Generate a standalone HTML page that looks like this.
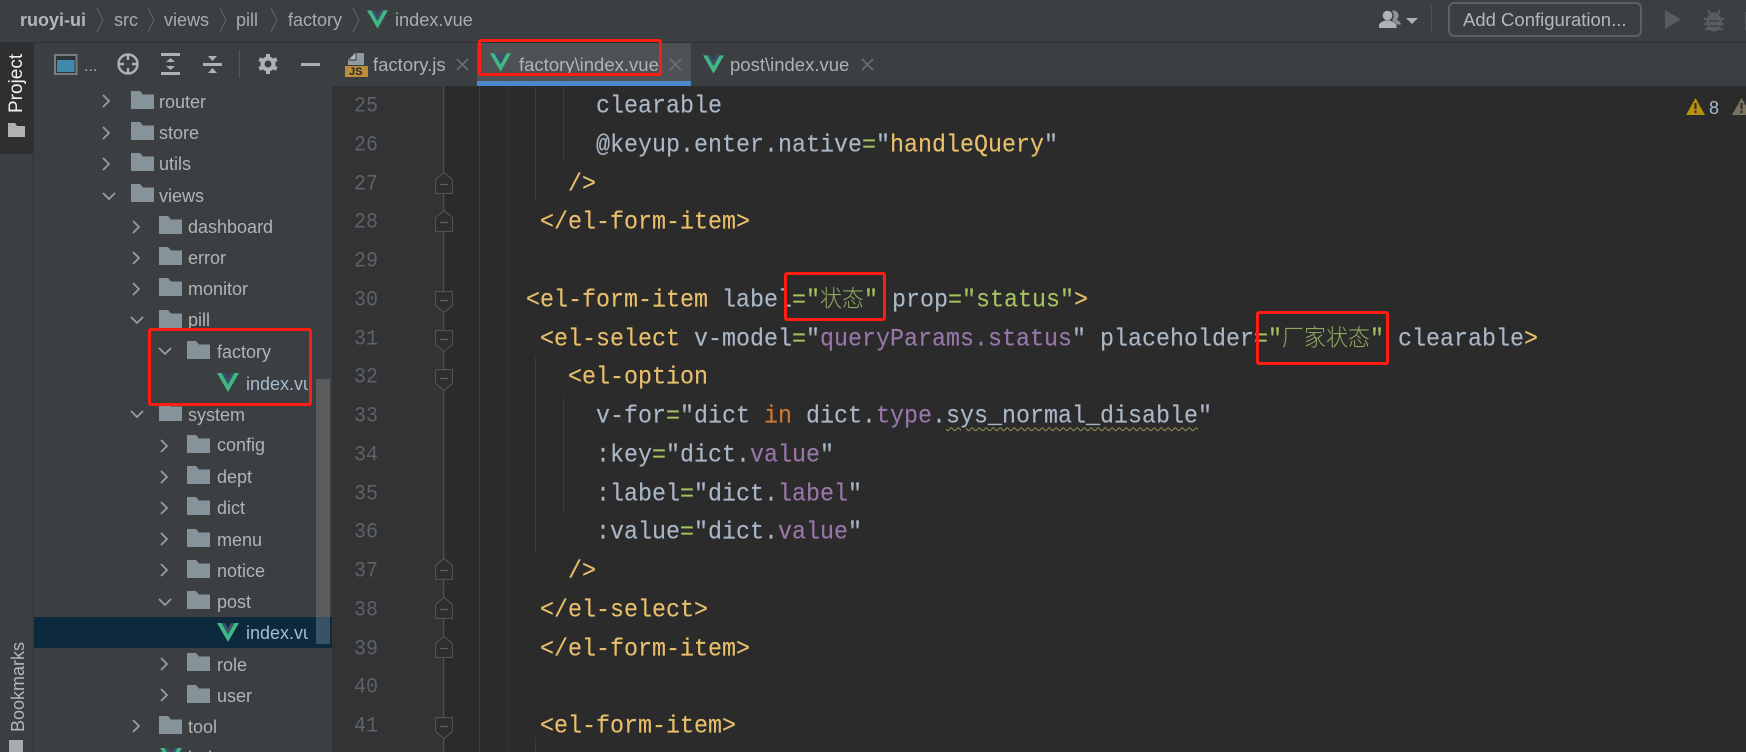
<!DOCTYPE html>
<html><head><meta charset="utf-8"><style>
*{margin:0;padding:0;box-sizing:border-box}
html,body{width:1746px;height:752px;overflow:hidden;background:#3c3f41}
body{position:relative;font-family:"Liberation Sans","Noto Sans CJK SC",sans-serif}
.a{position:absolute}
.t{position:absolute;white-space:pre;font-size:18px;line-height:24px;color:#afb1b3}
.tab{font-size:18.5px}
.tr{position:absolute;white-space:pre;font-size:18px;line-height:24px;color:#b1b3b5}
.bc{position:absolute;top:8px;white-space:pre;font-size:18px;line-height:24px;color:#a9abad}
.box{position:absolute;border:3.5px solid #ff1c12;border-radius:3px}
#code{position:absolute;left:526px;top:88px;font:23.33px/38.75px "Liberation Mono","Noto Sans CJK SC",monospace;color:#a9b7c6;white-space:pre;-webkit-text-stroke:.15px currentColor}
#code div{height:38.75px;transform:scaleY(1.07)}
#nums{position:absolute;left:332px;width:46px;top:88px;font:20px/38.75px "Liberation Mono",monospace;color:#5f6265;text-align:right}
#nums div{height:38.75px;transform:scaleY(1.12)}
.g{color:#e8bf6a}.s{color:#a5c261}.e{color:#a5c261}.p{color:#9876aa}.k{color:#cc7832}
.c{font:22px/0 "Noto Sans CJK SC",sans-serif;font-weight:300;color:#8fa860;-webkit-text-stroke:0}
.w{text-decoration:underline wavy #8f8a50 1px;text-underline-offset:4px}
svg{position:absolute;overflow:visible}
</style></head><body>
<svg width="0" height="0" style="position:absolute"><defs>
<symbol id="fo" viewBox="0 0 23 18"><path d="M0 0H9L12 3.500H23V18H0Z" fill="#87939a"/></symbol>
<symbol id="v" viewBox="0 0 22 19"><path d="M4.500 0H8.200L11 5L13.800 0H17.500L11 11.500Z" fill="#3a5068"/><path d="M0 0H4.500L11 11.500L17.500 0H22L11 19Z" fill="#41b883"/></symbol>
<symbol id="cr" viewBox="0 0 8 14"><path d="M1 1L7 7L1 13" fill="none" stroke="#9a9c9e" stroke-width="1.800"/></symbol>
<symbol id="cd" viewBox="0 0 14 8"><path d="M1 1L7 7L13 1" fill="none" stroke="#9a9c9e" stroke-width="1.800"/></symbol>
<symbol id="x" viewBox="0 0 14 14"><path d="M1 1L13 13M13 1L1 13" stroke="#6f7274" stroke-width="1.600"/></symbol>
<symbol id="bcc" viewBox="0 0 8 24"><path d="M1 0L7 12L1 24" fill="none" stroke="#5f6264" stroke-width="1.100"/></symbol>
<symbol id="fu" viewBox="0 0 18 22"><path d="M9 .5L17.500 7.500V21.500H.5V7.500Z" fill="#2d2e2f" stroke="#4f5153" stroke-width="1.200"/><path d="M5 12.500H13" stroke="#5f6163" stroke-width="1.200"/></symbol>
<symbol id="fd" viewBox="0 0 18 22"><path d="M.5 .5H17.500V14.500L9 21.500L.5 14.500Z" fill="#2d2e2f" stroke="#4f5153" stroke-width="1.200"/><path d="M5 9.500H13" stroke="#5f6163" stroke-width="1.200"/></symbol>
</defs></svg>

<!-- top bar -->
<div class="a" style="left:0;top:42px;width:1746px;height:1px;background:#2f3132"></div>
<div class="bc" style="left:20px;font-weight:bold;color:#b4b6b8">ruoyi-ui</div>
<svg style="left:96px;top:8px" width="8" height="24"><use href="#bcc"/></svg>
<div class="bc" style="left:114px">src</div>
<svg style="left:147px;top:8px" width="8" height="24"><use href="#bcc"/></svg>
<div class="bc" style="left:164px">views</div>
<svg style="left:219px;top:8px" width="8" height="24"><use href="#bcc"/></svg>
<div class="bc" style="left:236px">pill</div>
<svg style="left:270px;top:8px" width="8" height="24"><use href="#bcc"/></svg>
<div class="bc" style="left:288px">factory</div>
<svg style="left:352px;top:8px" width="8" height="24"><use href="#bcc"/></svg>
<svg style="left:367px;top:10px" width="21" height="19"><use href="#v"/></svg>
<div class="bc" style="left:395px;font-size:18.2px">index.vue</div>

<svg style="left:1379px;top:10px" width="40" height="18"><path d="M14 0.500A5 5 0 0 1 17.500 9.500C20 10.500 21.500 12 22 14.500H18C16.500 12.500 14 11 13 10.500C15 8 15.500 4 13 1Z" fill="#8f9193"/><circle cx="8.500" cy="5.500" r="4.800" fill="#b0b2b4"/><path d="M0 18V15C1 12 4 11.500 6 10.500H11C13 11.500 16 12 17.500 15V18Z" fill="#b0b2b4"/><path d="M27 8H39L33 14Z" fill="#afb1b3"/></svg>
<div class="a" style="left:1431px;top:5px;width:1px;height:28px;background:#515456"></div>
<div class="a" style="left:1448px;top:2px;width:194px;height:35px;border:2px solid #5d6062;border-radius:6px"></div>
<div class="bc" style="left:1463px;color:#b5b7b9;font-size:18.5px">Add Configuration...</div>
<svg style="left:1665px;top:10px" width="17" height="19"><path d="M0 0L16 9.500L0 19Z" fill="#595c5e"/></svg>
<svg style="left:1704px;top:9px" width="20" height="23"><path d="M6 5L4 1M14 5L16 1" stroke="#5a5d5f" stroke-width="2"/><ellipse cx="10" cy="13" rx="7.500" ry="9.500" fill="#5a5d5f"/><path d="M0 10H20M0 15H20M1 20H19" stroke="#5a5d5f" stroke-width="2"/><path d="M5 12H15M5 17H15" stroke="#3c3f41" stroke-width="1.600"/></svg>
<div class="a" style="left:1745px;top:12px;width:1px;height:18px;background:#505355"></div>

<!-- left stripe -->
<div class="a" style="left:33px;top:43px;width:1px;height:709px;background:#323232"></div>
<div class="a" style="left:0;top:43px;width:33px;height:111px;background:#2d2f30"></div>
<div class="t" style="left:-12px;top:72px;width:58px;height:24px;color:#f0f0f0;font-size:19px;transform:rotate(-90deg);text-align:center">Project</div>
<svg style="left:8px;top:123px" width="17" height="14"><path d="M0 0H7L9 3H17V14H0Z" fill="#afb1b3"/></svg>
<div class="t" style="left:-27px;top:675px;width:90px;height:24px;color:#b4b6b8;transform:rotate(-90deg);text-align:center">Bookmarks</div>
<div class="a" style="left:9px;top:740px;width:14px;height:12px;background:#a9abad"></div>

<!-- sidebar toolbar -->
<svg style="left:54px;top:54px" width="24" height="21"><rect x="1" y="1" width="21.500" height="19" fill="#2f3436" stroke="#7a7d7f" stroke-width="2"/><rect x="3" y="6" width="17.500" height="12" fill="#3f8aaa"/></svg>
<div class="t" style="left:84px;top:55px;color:#b0b2b4;font-size:16px">...</div>
<svg style="left:117px;top:53px" width="22" height="22"><circle cx="11" cy="11" r="9.500" fill="none" stroke="#afb1b3" stroke-width="2.400"/><path d="M11 1V7M11 15V21M1 11H7M15 11H21" stroke="#afb1b3" stroke-width="2.400"/></svg>
<svg style="left:161px;top:53px" width="20" height="22"><path d="M0 1.500H19M0 20.500H19" stroke="#afb1b3" stroke-width="3"/><path d="M5 9L9.500 5L14 9ZM5 13L9.500 17L14 13Z" fill="#afb1b3"/></svg>
<svg style="left:203px;top:55px" width="20" height="20"><path d="M0 9.500H19" stroke="#afb1b3" stroke-width="3"/><path d="M5 1L9.500 6L14 1ZM5 18L9.500 13L14 18Z" fill="#afb1b3"/></svg>
<div class="a" style="left:239px;top:50px;width:1px;height:28px;background:#54575a"></div>
<svg style="left:258px;top:54px" width="20" height="20" viewBox="0 0 20 20"><circle cx="10" cy="10" r="5.500" fill="none" stroke="#afb1b3" stroke-width="4"/><path d="M10 0V4M10 16V20M1.300 5L4.800 7M15.200 13L18.700 15M1.300 15L4.800 13M15.200 7L18.700 5" stroke="#afb1b3" stroke-width="4"/></svg>
<div class="a" style="left:301px;top:63px;width:19px;height:3px;background:#afb1b3"></div>

<!-- tabs -->
<div class="a" style="left:477px;top:43px;width:214px;height:38px;background:#4e5254"></div>
<div class="a" style="left:477px;top:81px;width:214px;height:5px;background:#4a88c7"></div>
<svg style="left:345px;top:53px" width="24" height="25"><path d="M3 12V7L10 0H19V12Z" fill="#8d9aa0"/><path d="M5 6L10.500 .5V6Z" fill="#b4bcc0"/><path d="M11 0V7H4" fill="none" stroke="#3c3f41" stroke-width="1"/><rect x="0" y="13" width="23" height="11" fill="#b98f3a"/></svg>
<div class="t" style="left:349px;top:66px;font-size:11px;line-height:12px;font-weight:bold;color:#2c2a20">JS</div>
<div class="t tab" style="left:373px;top:53px">factory.js</div>
<svg style="left:456px;top:58px" width="13" height="13"><use href="#x"/></svg>
<svg style="left:490px;top:53px" width="21" height="19"><use href="#v"/></svg>
<div class="t tab" style="left:519px;top:53px;color:#b1b3b5">factory\index.vue</div>
<svg style="left:669px;top:58px" width="13" height="13"><use href="#x"/></svg>
<svg style="left:703px;top:55px" width="21" height="19"><use href="#v"/></svg>
<div class="t tab" style="left:730px;top:53px">post\index.vue</div>
<svg style="left:861px;top:58px" width="13" height="13"><use href="#x"/></svg>

<!-- editor -->
<div class="a" style="left:332px;top:86px;width:1414px;height:666px;background:#2b2b2b"></div>
<div class="a" style="left:332px;top:86px;width:113px;height:666px;background:#313335"></div>
<div class="a" style="left:443px;top:86px;width:1px;height:666px;background:#4e5052"></div>
<div class="a" style="left:479px;top:86px;width:1px;height:666px;background:#393939"></div>
<div class="a" style="left:507px;top:86px;width:1px;height:666px;background:#363636"></div>
<div class="a" style="left:535px;top:86px;width:1px;height:115px;background:#393939"></div>
<div class="a" style="left:535px;top:357px;width:1px;height:195px;background:#393939"></div>
<div class="a" style="left:535px;top:738px;width:1px;height:14px;background:#393939"></div>
<div class="a" style="left:563px;top:86px;width:1px;height:76px;background:#393939"></div>
<div class="a" style="left:563px;top:397px;width:1px;height:117px;background:#393939"></div>

<svg style="left:435px;top:172px" width="18" height="22"><use href="#fu"/></svg>
<svg style="left:435px;top:210px" width="18" height="22"><use href="#fu"/></svg>
<svg style="left:435px;top:291px" width="18" height="22"><use href="#fd"/></svg>
<svg style="left:435px;top:330px" width="18" height="22"><use href="#fd"/></svg>
<svg style="left:435px;top:369px" width="18" height="22"><use href="#fd"/></svg>
<svg style="left:435px;top:558px" width="18" height="22"><use href="#fu"/></svg>
<svg style="left:435px;top:597px" width="18" height="22"><use href="#fu"/></svg>
<svg style="left:435px;top:636px" width="18" height="22"><use href="#fu"/></svg>
<svg style="left:435px;top:717px" width="18" height="22"><use href="#fd"/></svg>

<div id="nums"><div>25</div><div>26</div><div>27</div><div>28</div><div>29</div><div>30</div><div>31</div><div>32</div><div>33</div><div>34</div><div>35</div><div>36</div><div>37</div><div>38</div><div>39</div><div>40</div><div>41</div></div>

<div id="code"><div>     clearable</div><div>     @keyup.enter.native<span class="e">=</span>"<span class="g">handleQuery</span>"</div><div>   <span class="g">/&gt;</span></div><div> <span class="g">&lt;/el-form-item&gt;</span></div><div> </div><div><span class="g">&lt;el-form-item</span> label<span class="e">=</span><span class="s">"</span><span class="c">状态</span><span class="s">"</span> prop<span class="e">=</span><span class="s">"status"</span><span class="g">&gt;</span></div><div> <span class="g">&lt;el-select</span> v-model<span class="e">=</span>"<span class="p">queryParams.status</span>" placeholder<span class="e">=</span><span class="s">"</span><span class="c">厂家状态</span><span class="s">"</span> clearable<span class="g">&gt;</span></div><div>   <span class="g">&lt;el-option</span></div><div>     v-for<span class="e">=</span>"dict <span class="k">in</span> dict.<span class="p">type</span>.<span class="w">sys_normal_disable</span>"</div><div>     :key<span class="e">=</span>"dict.<span class="p">value</span>"</div><div>     :label<span class="e">=</span>"dict.<span class="p">label</span>"</div><div>     :value<span class="e">=</span>"dict.<span class="p">value</span>"</div><div>   <span class="g">/&gt;</span></div><div> <span class="g">&lt;/el-select&gt;</span></div><div> <span class="g">&lt;/el-form-item&gt;</span></div><div> </div><div> <span class="g">&lt;el-form-item&gt;</span></div></div>

<svg style="left:1686px;top:98px" width="60" height="18"><path d="M9.500 0L19 17H0Z" fill="#b8900f"/><path d="M8.500 5H10.500V11H8.500ZM8.500 12.500H10.500V15H8.500Z" fill="#2b2b2b"/><path d="M55.500 0L65 17H46Z" fill="#7a7360"/><path d="M54.500 5H56.500V11H54.500ZM54.500 12.500H56.500V15H54.500Z" fill="#2b2b2b"/></svg>
<div class="t" style="left:1709px;top:96px;color:#a9bdd0">8</div>

<!-- tree -->
<div id="tree">
<svg style="left:102px;top:94px" width="8" height="14"><use href="#cr"/></svg><svg style="left:131px;top:90.500px" width="23" height="18"><use href="#fo"/></svg><div class="tr" style="left:159px;top:89.500px">router</div>
<svg style="left:102px;top:126px" width="8" height="14"><use href="#cr"/></svg><svg style="left:131px;top:122px" width="23" height="18"><use href="#fo"/></svg><div class="tr" style="left:159px;top:121px">store</div>
<svg style="left:102px;top:157px" width="8" height="14"><use href="#cr"/></svg><svg style="left:131px;top:153px" width="23" height="18"><use href="#fo"/></svg><div class="tr" style="left:159px;top:152px">utils</div>
<svg style="left:102px;top:192px" width="14" height="8"><use href="#cd"/></svg><svg style="left:131px;top:184px" width="23" height="18"><use href="#fo"/></svg><div class="tr" style="left:159px;top:183.500px">views</div>
<svg style="left:132px;top:220px" width="8" height="14"><use href="#cr"/></svg><svg style="left:159px;top:216px" width="23" height="18"><use href="#fo"/></svg><div class="tr" style="left:188px;top:214.500px">dashboard</div>
<svg style="left:132px;top:251px" width="8" height="14"><use href="#cr"/></svg><svg style="left:159px;top:247px" width="23" height="18"><use href="#fo"/></svg><div class="tr" style="left:188px;top:246px">error</div>
<svg style="left:132px;top:282px" width="8" height="14"><use href="#cr"/></svg><svg style="left:159px;top:278px" width="23" height="18"><use href="#fo"/></svg><div class="tr" style="left:188px;top:277px">monitor</div>
<svg style="left:130px;top:316px" width="14" height="8"><use href="#cd"/></svg><svg style="left:159px;top:310px" width="23" height="18"><use href="#fo"/></svg><div class="tr" style="left:188px;top:308px">pill</div>
<svg style="left:158px;top:347px" width="14" height="8"><use href="#cd"/></svg><svg style="left:187px;top:341px" width="23" height="18"><use href="#fo"/></svg><div class="tr" style="left:217px;top:339.500px">factory</div>
<svg style="left:217px;top:373px" width="22" height="19"><use href="#v"/></svg><div class="tr" style="left:246px;top:371.500px;width:62px;overflow:hidden;color:#a5bcd0">index.vue</div>
<svg style="left:130px;top:410px" width="14" height="8"><use href="#cd"/></svg><svg style="left:159px;top:403px" width="23" height="18"><use href="#fo"/></svg><div class="tr" style="left:188px;top:403px">system</div>
<svg style="left:160px;top:439px" width="8" height="14"><use href="#cr"/></svg><svg style="left:187px;top:435px" width="23" height="18"><use href="#fo"/></svg><div class="tr" style="left:217px;top:433px">config</div>
<svg style="left:160px;top:470px" width="8" height="14"><use href="#cr"/></svg><svg style="left:187px;top:466px" width="23" height="18"><use href="#fo"/></svg><div class="tr" style="left:217px;top:464.500px">dept</div>
<svg style="left:160px;top:501px" width="8" height="14"><use href="#cr"/></svg><svg style="left:187px;top:497px" width="23" height="18"><use href="#fo"/></svg><div class="tr" style="left:217px;top:496px">dict</div>
<svg style="left:160px;top:532px" width="8" height="14"><use href="#cr"/></svg><svg style="left:187px;top:529px" width="23" height="18"><use href="#fo"/></svg><div class="tr" style="left:217px;top:527.500px">menu</div>
<svg style="left:160px;top:563px" width="8" height="14"><use href="#cr"/></svg><svg style="left:187px;top:560px" width="23" height="18"><use href="#fo"/></svg><div class="tr" style="left:217px;top:558.500px">notice</div>
<svg style="left:158px;top:598px" width="14" height="8"><use href="#cd"/></svg><svg style="left:187px;top:591px" width="23" height="18"><use href="#fo"/></svg><div class="tr" style="left:217px;top:589.500px">post</div>
<div class="a" style="left:34px;top:617px;width:298px;height:31px;background:#0d293e"></div>
<svg style="left:217px;top:623px" width="22" height="19"><use href="#v"/></svg><div class="tr" style="left:246px;top:621px;width:62px;overflow:hidden;color:#a5bcd0">index.vue</div>
<svg style="left:160px;top:657px" width="8" height="14"><use href="#cr"/></svg><svg style="left:187px;top:653px" width="23" height="18"><use href="#fo"/></svg><div class="tr" style="left:217px;top:652.500px">role</div>
<svg style="left:160px;top:688px" width="8" height="14"><use href="#cr"/></svg><svg style="left:187px;top:685px" width="23" height="18"><use href="#fo"/></svg><div class="tr" style="left:217px;top:683.500px">user</div>
<svg style="left:132px;top:719px" width="8" height="14"><use href="#cr"/></svg><svg style="left:159px;top:716px" width="23" height="18"><use href="#fo"/></svg><div class="tr" style="left:188px;top:714.500px">tool</div>
<svg style="left:160px;top:748px" width="22" height="19"><use href="#v"/></svg><div class="tr" style="left:188px;top:746px;color:#a5bcd0">index.vue</div>
</div>
<div class="a" style="left:316px;top:379px;width:14px;height:238px;background:#5a5c5e"></div>
<div class="a" style="left:316px;top:617px;width:14px;height:27px;background:#3a5266"></div>

<!-- annotation boxes -->
<div class="box" style="left:478px;top:39px;width:184px;height:37px"></div>
<div class="box" style="left:148px;top:328px;width:164px;height:78px"></div>
<div class="box" style="left:784px;top:272px;width:102px;height:49px"></div>
<div class="box" style="left:1256px;top:311px;width:133px;height:54px"></div>
</body></html>
